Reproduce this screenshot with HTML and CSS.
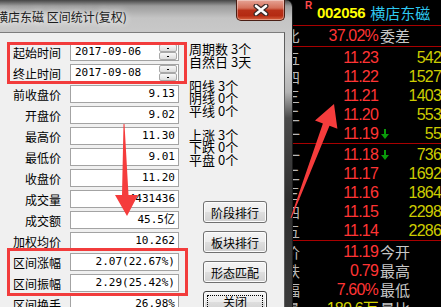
FILE: index.html
```html
<!DOCTYPE html>
<html>
<head>
	<title>区间统计</title>
	<link rel="stylesheet" href="styles.css">
</head>
<body>
	<div class="quote">
		<div class="q-head">
			<span class="q-r">R</span>
			<span class="q-code">002056</span>
			<span class="q-name">横店东磁</span>
		</div>
		<div class="q-row q-ratio">
			<span class="q-lab">委比</span>
			<span class="q-price">37.02%</span>
			<span class="q-tag">委差</span>
			<span class="q-vol"></span>
		</div>
		<div class="q-block">
			<div class="q-row"><span class="q-lab">卖五</span><span class="q-price">11.23</span><span class="q-tag"></span><span class="q-vol">542</span></div>
			<div class="q-row"><span class="q-lab">卖四</span><span class="q-price">11.22</span><span class="q-tag"></span><span class="q-vol">1527</span></div>
			<div class="q-row"><span class="q-lab">卖三</span><span class="q-price">11.21</span><span class="q-tag"></span><span class="q-vol">1403</span></div>
			<div class="q-row"><span class="q-lab">卖二</span><span class="q-price">11.20</span><span class="q-tag"></span><span class="q-vol">553</span></div>
			<div class="q-row"><span class="q-lab">卖一</span><span class="q-price">11.19</span><span class="q-tag"><svg class="down" width="10" height="12" viewBox="0 0 10 12"><path d="M5 1V9" stroke="#0a9a0a" stroke-width="2"/><path d="M1 6L5 11L9 6Z" fill="#0a9a0a"/></svg></span><span class="q-vol">55</span></div>
		</div>
		<div class="q-block">
			<div class="q-row"><span class="q-lab">买一</span><span class="q-price">11.18</span><span class="q-tag"><svg class="down" width="10" height="12" viewBox="0 0 10 12"><path d="M5 1V9" stroke="#0a9a0a" stroke-width="2"/><path d="M1 6L5 11L9 6Z" fill="#0a9a0a"/></svg></span><span class="q-vol">736</span></div>
			<div class="q-row"><span class="q-lab">买二</span><span class="q-price">11.17</span><span class="q-tag"></span><span class="q-vol">1692</span></div>
			<div class="q-row"><span class="q-lab">买三</span><span class="q-price">11.16</span><span class="q-tag"></span><span class="q-vol">1864</span></div>
			<div class="q-row"><span class="q-lab">买四</span><span class="q-price">11.15</span><span class="q-tag"></span><span class="q-vol">2298</span></div>
			<div class="q-row"><span class="q-lab">买五</span><span class="q-price">11.14</span><span class="q-tag"></span><span class="q-vol">2286</span></div>
		</div>
		<div class="q-block q-last">
			<div class="q-row"><span class="q-lab">现价</span><span class="q-price">11.19</span><span class="q-tag">今开</span><span class="q-vol"></span></div>
			<div class="q-row"><span class="q-lab">涨跌</span><span class="q-price">0.79</span><span class="q-tag">最高</span><span class="q-vol"></span></div>
			<div class="q-row"><span class="q-lab">涨幅</span><span class="q-price">7.60%</span><span class="q-tag">最低</span><span class="q-vol"></span></div>
			<div class="q-row"><span class="q-lab">总量</span><span class="q-price q-yellow">180.6万</span><span class="q-tag">量比</span><span class="q-vol"></span></div>
		</div>
	</div>

	<div class="dlg">
		<div class="dlg-title">
			<span class="dlg-caption">横店东磁 区间统计(复权)</span>
			<span class="dlg-close">
				<svg width="16" height="12" viewBox="0 0 16 12">
					<path d="M3 2L13 10M13 2L3 10" stroke="#3a2a28" stroke-width="5" stroke-linecap="round"/>
					<path d="M3 2L13 10M13 2L3 10" stroke="#fff" stroke-width="2.6" stroke-linecap="round"/>
				</svg>
			</span>
		</div>
		<div class="dlg-body">
			<div class="form">
				<div class="field">
					<span class="field-label">起始时间</span>
					<div class="box box-date">2017-09-06<span class="spin"><span class="spin-btn"></span><span class="spin-btn"></span></span></div>
				</div>
				<div class="field">
					<span class="field-label">终止时间</span>
					<div class="box box-date">2017-09-08<span class="spin"><span class="spin-btn"></span><span class="spin-btn"></span></span></div>
				</div>
				<div class="field"><span class="field-label">前收盘价</span><div class="box">9.13</div></div>
				<div class="field"><span class="field-label">开盘价</span><div class="box">9.02</div></div>
				<div class="field"><span class="field-label">最高价</span><div class="box">11.30</div></div>
				<div class="field"><span class="field-label">最低价</span><div class="box">9.01</div></div>
				<div class="field"><span class="field-label">收盘价</span><div class="box">11.20</div></div>
				<div class="field"><span class="field-label">成交量</span><div class="box">4431436</div></div>
				<div class="field"><span class="field-label">成交额</span><div class="box">45.5亿</div></div>
				<div class="field"><span class="field-label">加权均价</span><div class="box">10.262</div></div>
				<div class="field"><span class="field-label">区间涨幅</span><div class="box">2.07(22.67%)</div></div>
				<div class="field"><span class="field-label">区间振幅</span><div class="box">2.29(25.42%)</div></div>
				<div class="field"><span class="field-label">区间换手</span><div class="box">26.98%</div></div>
			</div>
			<div class="side">
				<div class="stats">
					<div>周期数 3个</div>
					<div>自然日 3天</div>
				</div>
				<div class="stats">
					<div>阳线 3个</div>
					<div>阴线 0个</div>
					<div>平线 0个</div>
				</div>
				<div class="stats">
					<div>上涨 3个</div>
					<div>下跌 0个</div>
					<div>平盘 0个</div>
				</div>
				<div class="btns">
					<button class="btn">阶段排行</button>
					<button class="btn">板块排行</button>
					<button class="btn">形态匹配</button>
					<button class="btn btn-default"><span class="focus">关闭</span></button>
				</div>
			</div>
		</div>
	</div>

	<!-- red annotation marks drawn over the screenshot -->
	<svg class="marks" width="441" height="307" viewBox="0 0 441 307">
		<rect x="8.5" y="43.5" width="177" height="39" fill="none" stroke="#f23c3c" stroke-width="3"/>
		<rect x="8.5" y="249.5" width="178" height="45" fill="none" stroke="#f23c3c" stroke-width="3"/>
		<polygon points="123.5,124 124.5,124 128.5,195 138,195 127,216 115,195 122,195" fill="#f53c3c"/>
		<polygon points="290.5,218 291.5,218 329.5,125.8 337.4,128.8 334,104 315,120.4 322.9,123.4" fill="#f53c3c"/>
	</svg>
</body>
</html>
```

FILE: styles.css
```css
body {
	margin: 0;
	width: 441px;
	height: 307px;
	overflow: hidden;
	position: relative;
	background-color: #000;
	font-family: "Noto Sans CJK SC", sans-serif;
}

/* quote panel behind the dialog */

.quote {
	margin-left: 254px;
	width: 187px;
	font-family: "Liberation Sans", "Noto Sans CJK SC", sans-serif;
}

.q-head {
	height: 25px;
	border-bottom: 1px solid #a80000;
	display: flex;
	align-items: flex-start;
	padding-left: 51px;
}

.q-r {
	color: #ff4a4a;
	font-weight: bold;
	font-size: 10px;
	line-height: 10px;
	margin-top: 1px;
	width: 12px;
}

.q-code {
	color: #ffff00;
	font-weight: bold;
	font-size: 15px;
	line-height: 16px;
	letter-spacing: -0.3px;
	margin-top: 5px;
}

.q-name {
	color: #2ec8f0;
	font-family: "Noto Sans CJK SC", sans-serif;
	font-size: 15px;
	line-height: 25px;
	margin-left: 5px;
}

.q-row {
	display: grid;
	grid-template-columns: 46px 78px 30px 1fr;
	height: 19px;
	line-height: 19px;
	font-size: 16px;
	white-space: nowrap;
}

.q-ratio {
	height: 20px;
	line-height: 20px;
	border-bottom: 1px solid #a80000;
}

.q-block {
	padding-top: 1px;
	border-bottom: 1px solid #a80000;
}

.q-block:first-of-type {
	padding-top: 0;
}

.q-last {
	border-bottom: none;
}

.q-lab {
	text-align: right;
	color: #b8b8b8;
	font-family: "Noto Sans CJK SC", sans-serif;
	font-size: 15px;
}

.q-price {
	text-align: right;
	color: #ff3434;
	letter-spacing: -0.8px;
}

.q-yellow {
	color: #d4d400;
}

.q-tag {
	padding-left: 2px;
	color: #c8c8c8;
	font-family: "Noto Sans CJK SC", sans-serif;
	font-size: 15px;
	display: flex;
	align-items: center;
}

.q-vol {
	text-align: right;
	color: #cccc00;
	letter-spacing: -0.8px;
}

.down {
	display: block;
}

/* the statistics dialog */

.dlg {
	position: absolute;
	left: 0;
	top: 0;
	width: 292px;
	height: 307px;
	display: flex;
	flex-direction: column;
	border-right: 1px solid #1a1a1a;
	border-top-right-radius: 7px;
	background: linear-gradient(to bottom, #454545 0, #9c9c9c 6px, #c4c4c4 18px, #d2d2d2 60px, #b4b4b4 92px, #4a4a4a 118px, #2e2e2e 200px, #3a3a3a 100%);
}

.dlg-title {
	height: 32px;
	flex-shrink: 0;
	display: flex;
	align-items: flex-start;
}

.dlg-caption {
	margin-left: -4px;
	padding-top: 11px;
	font-size: 12px;
	line-height: 12px;
	color: #1c1c1c;
	white-space: nowrap;
	text-shadow: 0 0 6px #fff, 0 0 10px #eee;
}

.dlg-close {
	margin-left: auto;
	margin-right: 7px;
	width: 47px;
	height: 20px;
	border: 1px solid #4a1e14;
	border-top: none;
	border-radius: 0 0 5px 5px;
	background: linear-gradient(to bottom, #e6a496 0, #d4705a 40%, #b83018 52%, #b42a12 78%, #d8623e 100%);
	box-shadow: inset 0 0 0 1px rgba(255, 255, 255, 0.35);
	display: flex;
	align-items: center;
	justify-content: center;
}

.dlg-close svg {
	display: block;
}

.dlg-body {
	flex: 1;
	min-height: 0;
	overflow: hidden;
	margin-right: 7px;
	padding-top: 10px;
	display: flex;
	background-color: #f0f0f0;
	border-top: 1px solid #7d7d7d;
	border-right: 1px solid #5e5e5e;
}

.form {
	width: 179px;
	flex-shrink: 0;
}

.field {
	display: flex;
	align-items: center;
	height: 18px;
	margin-bottom: 3px;
}

.field-label {
	width: 61px;
	margin-right: 9px;
	text-align: right;
	font-size: 12px;
	color: #000;
	white-space: nowrap;
}

.box {
	width: 109px;
	height: 18px;
	box-sizing: border-box;
	border: 1px solid #a3a3a3;
	background-color: #fff;
	padding-right: 3px;
	text-align: right;
	font-family: "DejaVu Sans Mono", "Noto Sans CJK SC", monospace;
	font-size: 11px;
	line-height: 16px;
	color: #000;
	white-space: nowrap;
}

.box-date {
	display: flex;
	padding: 0 1px 0 4px;
	text-align: left;
}

.spin {
	margin-left: auto;
	width: 18px;
	display: flex;
	flex-direction: column;
}

.spin-btn {
	flex: 1;
	border: 1px solid #a8a8a8;
	border-radius: 2px;
	background: linear-gradient(to bottom, #f8f8f8, #dcdcdc);
	display: flex;
	align-items: center;
	justify-content: center;
}

.spin-btn::after {
	content: "";
	width: 2px;
	height: 1px;
	background-color: #000;
}

.side {
	margin-left: 10px;
	font-size: 13px;
	color: #000;
}

.stats {
	line-height: 12.5px;
	white-space: nowrap;
}

.stats + .stats {
	margin-top: 11.5px;
}

.btns {
	display: flex;
	flex-direction: column;
	gap: 8px;
	margin-top: 35px;
	margin-left: 14px;
}

.btn {
	width: 64px;
	height: 22px;
	flex-shrink: 0;
	padding: 0;
	border: 1px solid #707070;
	border-radius: 3px;
	background: linear-gradient(to bottom, #f4f4f4 0, #ececec 48%, #dedede 52%, #d0d0d0 100%);
	box-shadow: inset 0 0 0 1px #fcfcfc;
	font-family: "Noto Sans CJK SC", sans-serif;
	font-size: 12px;
	color: #000;
}

.btn-default {
	border-color: #3c3c3c;
	display: flex;
	align-items: stretch;
	justify-content: stretch;
	padding: 3px;
}

.focus {
	flex: 1;
	border: 1px dotted #000;
	line-height: 12px;
	text-align: center;
}

.marks {
	position: absolute;
	left: 0;
	top: 0;
	pointer-events: none;
}
```
